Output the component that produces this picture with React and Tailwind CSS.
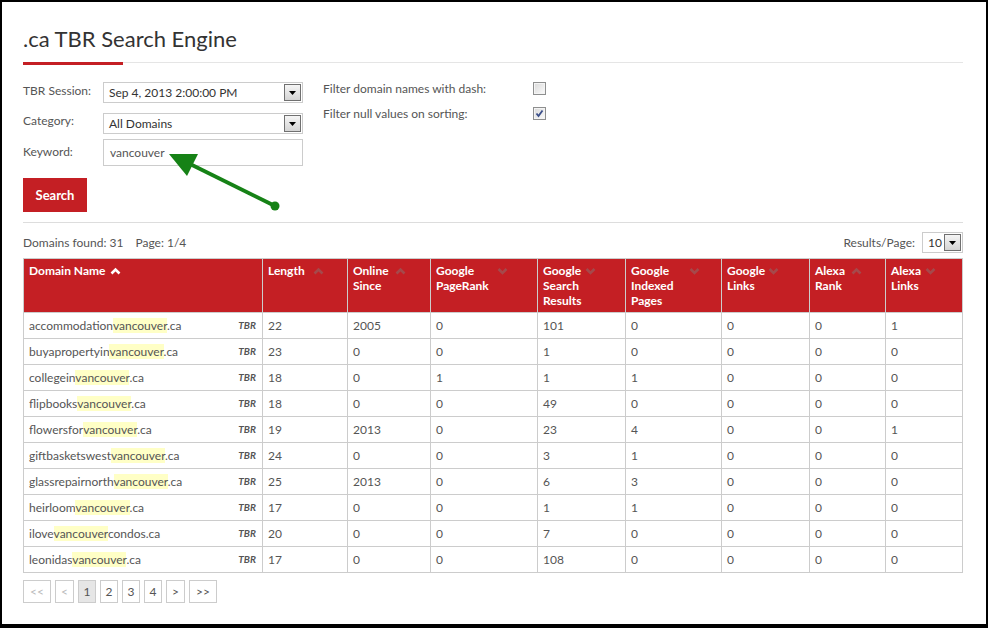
import React from 'react';

const RED = 'bg-[#c41f24]';

function DropBtn() {
  return (
    <div className="w-[17px] h-[17px] border border-[#707070] bg-linear-to-b from-[#f5f5f5] to-[#d4d4d4] flex items-center justify-center">
      <svg width="7" height="4" viewBox="0 0 7 4">
        <path d="M0 0H7L3.5 4Z" fill="#000" />
      </svg>
    </div>
  );
}

function Select({ value }) {
  return (
    <div className="w-[200px] h-[21px] border border-[#cccccc] flex items-center justify-between pl-[5px] pr-[1px] bg-white">
      <span className="text-[12px] text-[#333333]">{value}</span>
      <DropBtn />
    </div>
  );
}

function Checkbox({ checked }) {
  return (
    <div className="w-[13px] h-[13px] border border-[#8e8f8f] bg-[#f4f4f4] p-[1px]">
      <div className="w-full h-full bg-linear-to-br from-[#dcdcdc] to-[#f8f8f8] flex items-center justify-center">
        {checked && (
          <svg width="9" height="9" viewBox="0 0 9 9">
            <path d="M1.5 4.5 L3.5 7 L7.5 1.5" stroke="#3b4f8a" strokeWidth="1.8" fill="none" />
          </svg>
        )}
      </div>
    </div>
  );
}

function Chevron({ dir, active }) {
  const color = active ? '#ffffff' : '#a5494b';
  const d = dir === 'up' ? 'M1.5 6.5 L5.5 2.5 L9.5 6.5' : 'M1.5 2 L5.5 6 L9.5 2';
  return (
    <svg width="11" height="8" viewBox="0 0 11 8" className="shrink-0 mt-[4px]">
      <path d={d} stroke={color} strokeWidth="2.6" fill="none" />
    </svg>
  );
}

const cols = 'grid-cols-[239px_85px_83px_107px_88px_96px_88px_76px_77px]';

const headers = [
  { lines: ['Domain Name'], dir: 'up', active: true },
  { lines: ['Length'], dir: 'up', w: 'w-[45px]' },
  { lines: ['Online', 'Since'], dir: 'up', w: 'w-[42px]' },
  { lines: ['Google', 'PageRank'], dir: 'down', w: 'w-[61px]' },
  { lines: ['Google', 'Search', 'Results'], dir: 'down', w: 'w-[42px]' },
  { lines: ['Google', 'Indexed', 'Pages'], dir: 'down', w: 'w-[58px]' },
  { lines: ['Google', 'Links'], dir: 'down', w: 'w-[41px]' },
  { lines: ['Alexa', 'Rank'], dir: 'up', w: 'w-[36px]' },
  { lines: ['Alexa', 'Links'], dir: 'down', w: 'w-[34px]' },
];

const rows = [
  ['accommodation', '.ca', '22', '2005', '0', '101', '0', '0', '0', '1'],
  ['buyapropertyin', '.ca', '23', '0', '0', '1', '0', '0', '0', '0'],
  ['collegein', '.ca', '18', '0', '1', '1', '1', '0', '0', '0'],
  ['flipbooks', '.ca', '18', '0', '0', '49', '0', '0', '0', '0'],
  ['flowersfor', '.ca', '19', '2013', '0', '23', '4', '0', '0', '1'],
  ['giftbasketswest', '.ca', '24', '0', '0', '3', '1', '0', '0', '0'],
  ['glassrepairnorth', '.ca', '25', '2013', '0', '6', '3', '0', '0', '0'],
  ['heirloom', '.ca', '17', '0', '0', '1', '1', '0', '0', '0'],
  ['ilove', 'condos.ca', '20', '0', '0', '7', '0', '0', '0', '0'],
  ['leonidas', '.ca', '17', '0', '0', '108', '0', '0', '0', '0'],
];

const pages = [
  { t: '<<', w: 'w-[28px]', dis: true },
  { t: '<', w: 'w-[19px]', dis: true },
  { t: '1', w: 'w-[18px]', cur: true },
  { t: '2', w: 'w-[18px]' },
  { t: '3', w: 'w-[18px]' },
  { t: '4', w: 'w-[18px]' },
  { t: '>', w: 'w-[19px]' },
  { t: '>>', w: 'w-[28px]' },
];

export default function App() {
  return (
    <div className="relative w-[988px] h-[628px] bg-white border-black border-t-2 border-l-2 border-r-2 border-b-4 overflow-hidden font-['Lato',sans-serif] text-[#555555]">
      <div className="ml-[21px] w-[940px] pt-[22px]">
        <h1 className="text-[22px] leading-[30px] text-[#333333] font-normal">.ca TBR Search Engine</h1>
        <div className="flex items-start mt-[8px]">
          <div className={`w-[100px] h-[3px] ${RED}`} />
          <div className="flex-1 h-px bg-[#e5e5e5]" />
        </div>

        <div className="flex mt-[17px]">
          <div className="w-[280px] flex flex-col text-[12px]">
            <div className="flex items-center h-[21px]">
              <span className="w-[80px] -mt-[3px]">TBR Session:</span>
              <Select value="Sep 4, 2013 2:00:00 PM" />
            </div>
            <div className="flex items-center h-[21px] mt-[10px]">
              <span className="w-[80px] -mt-[5px]">Category:</span>
              <Select value="All Domains" />
            </div>
            <div className="flex items-center h-[27px] mt-[5px]">
              <span className="w-[80px] -mt-[1px]">Keyword:</span>
              <div className="w-[200px] h-[27px] border border-[#cccccc] flex items-center pl-[6px] text-[#555555]">vancouver</div>
            </div>
            <button className={`mt-[12px] w-[64px] h-[34px] ${RED} text-white font-bold text-[13px] pt-[2px] cursor-pointer`}>Search</button>
          </div>
          <div className="ml-[20px] flex flex-col gap-[12px] text-[12px]">
            <div className="flex items-center h-[13px]">
              <span className="w-[210px]">Filter domain names with dash:</span>
              <Checkbox />
            </div>
            <div className="flex items-center h-[13px]">
              <span className="w-[210px]">Filter null values on sorting:</span>
              <Checkbox checked />
            </div>
          </div>
        </div>

        <div className="mt-[10px] h-px bg-[#dddddd]" />

        <div className="mt-[9px] h-[21px] flex items-center justify-between text-[12px]">
          <div className="flex">
            <span>Domains found: 31</span>
            <span className="ml-[12px]">Page: 1/4</span>
          </div>
          <div className="flex items-center">
            <span>Results/Page:</span>
            <div className="ml-[7px] w-[41px] h-[21px] border border-[#cccccc] flex items-center justify-between pl-[5px] pr-[1px]">
              <span className="text-[12px] text-[#333333]">10</span>
              <DropBtn />
            </div>
          </div>
        </div>

        <div className={`mt-[5px] grid ${cols} border-l border-t border-[#cccccc] text-[12px]`}>
          {headers.map((h, i) => (
            <div key={i} className={`h-[54px] ${RED} border-r border-b border-[#cccccc] pl-[5px] pt-[4px] text-white font-bold leading-[15px] flex items-start`}>
              {h.active ? (
                <div className="flex items-start gap-[5px]">
                  <span>{h.lines[0]}</span>
                  <Chevron dir={h.dir} active />
                </div>
              ) : (
                <>
                  <div className={`${h.w} shrink-0 flex flex-col`}>
                    {h.lines.map((l) => (
                      <span key={l}>{l}</span>
                    ))}
                  </div>
                  <Chevron dir={h.dir} />
                </>
              )}
            </div>
          ))}
          {rows.map((r, ri) => (
            <React.Fragment key={ri}>
              <div className="h-[26px] border-r border-b border-[#cccccc] pl-[5px] pr-[6px] flex items-center justify-between">
                <span>
                  {r[0]}
                  <span className="bg-[#ffffc6]">vancouver</span>
                  {r[1]}
                </span>
                <span className="text-[10px] italic font-bold text-[#555555]">TBR</span>
              </div>
              {r.slice(2).map((c, ci) => (
                <div key={ci} className="h-[26px] border-r border-b border-[#cccccc] pl-[5px] flex items-center">
                  {c}
                </div>
              ))}
            </React.Fragment>
          ))}
        </div>

        <div className="mt-[7px] flex gap-[4px] text-[12px]">
          {pages.map((p) => (
            <div
              key={p.t}
              className={`${p.w} h-[23px] border border-[#cccccc] flex items-center justify-center ${p.cur ? 'bg-[#e6e6e6]' : 'bg-white'} ${p.dis ? 'text-[#bbbbbb]' : 'text-[#555555]'}`}
            >
              {p.t}
            </div>
          ))}
        </div>
      </div>

      <svg className="absolute top-[-2px] left-[-2px] pointer-events-none" width="988" height="628" viewBox="0 0 988 628">
        <line x1="275" y1="206" x2="186" y2="162" stroke="#168216" strokeWidth="4" />
        <polygon points="169,154 198,154 187,176" fill="#168216" />
        <circle cx="275" cy="206" r="4.5" fill="#168216" />
      </svg>
    </div>
  );
}
